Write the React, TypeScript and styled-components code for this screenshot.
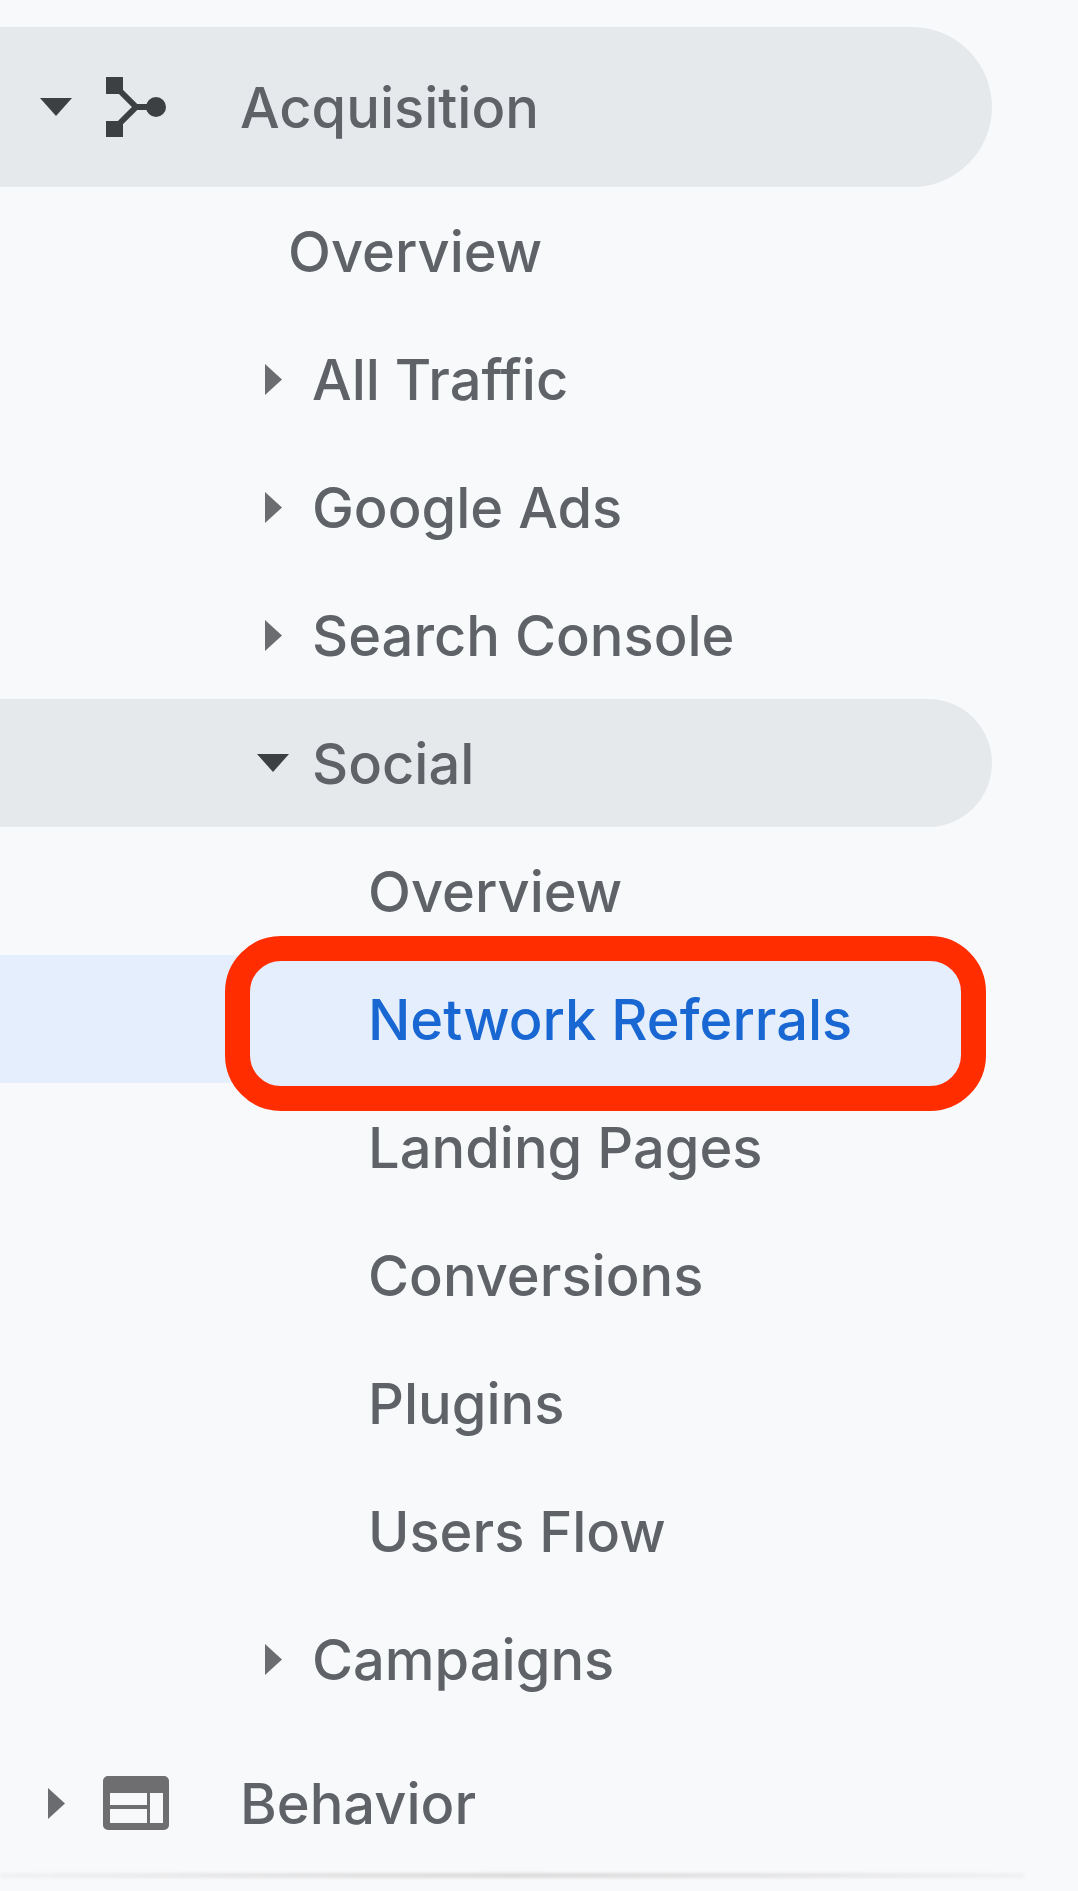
import React, { FC } from "react";
import styled, { createGlobalStyle } from "styled-components";

const GlobalStyle = createGlobalStyle`
  html, body {
    margin: 0;
    padding: 0;
    background: #f8f9fb;
  }
  body {
    font-family: Inter, Roboto, "Noto Sans", sans-serif;
    overflow: hidden;
  }
`;

const Sidebar = styled.nav`
  width: 1078px;
  height: 1891px;
  overflow: hidden;
  background: #f8f9fb;
`;

const Menu = styled.ul`
  list-style: none;
  margin: 0;
  padding: 27px 0 0;
  height: 1846px;
  overflow: hidden;
`;

const Row = styled.li<{ $indent: number; $tall?: boolean; $open?: boolean; $active?: boolean }>`
  position: relative;
  display: flex;
  align-items: center;
  box-sizing: border-box;
  height: ${({ $tall }) => ($tall ? 160 : 128)}px;
  padding-left: ${({ $indent }) => $indent}px;
  width: ${({ $open, $active }) => ($open ? "992px" : $active ? "300px" : "100%")};
  background: ${({ $open, $active }) => ($open ? "#e6e9ec" : $active ? "#e4eefc" : "transparent")};
  border-radius: ${({ $open }) => ($open ? "0 80px 80px 0" : "0")};
`;

const CaretSlot = styled.span`
  display: flex;
  align-items: center;
  justify-content: center;
  flex: none;
  width: 34px;
  margin-right: 22px;
`;

const TopCaretSlot = styled(CaretSlot)`
  margin-right: 30px;
`;

const IconSlot = styled.span`
  display: flex;
  align-items: center;
  justify-content: center;
  flex: none;
  width: 66px;
  margin-right: 71px;
`;

const Label = styled.span<{ $active?: boolean }>`
  position: relative;
  z-index: 1;
  padding-top: 2px;
  font-size: 56px;
  font-weight: 500;
  line-height: 64px;
  white-space: nowrap;
  color: ${({ $active }) => ($active ? "#1967d2" : "#5f6368")};
`;

const Highlight = styled.div`
  position: absolute;
  left: 225px;
  top: -19px;
  width: 761px;
  height: 175px;
  box-sizing: border-box;
  border: 25px solid #ff2d00;
  border-radius: 56px;
  background: #e4eefc;
`;

const Footer = styled.div`
  width: 1024px;
  height: 5px;
  filter: blur(1.5px);
  background: linear-gradient(90deg, #f0f1f2 0%, #e0e0e0 35%, #dadada 50%, #e2e2e3 72%, #f0f1f2 100%);
`;

const CaretDown: FC<{ color?: string }> = ({ color = "#3c4043" }) => (
  <svg width="32" height="18" viewBox="0 0 32 18">
    <path d="M0 0h32L16 18z" fill={color} />
  </svg>
);

const CaretRight: FC = () => (
  <svg width="17" height="31" viewBox="0 0 17 31">
    <path d="M0 0l17 15.5L0 31z" fill="#6a6c70" />
  </svg>
);

const AcquisitionIcon: FC = () => (
  <svg width="60" height="60" viewBox="0 0 60 60">
    <rect x="0" y="0" width="17" height="17" fill="#3c4043" />
    <rect x="0" y="44" width="17" height="17" fill="#3c4043" />
    <circle cx="50" cy="30" r="10" fill="#3c4043" />
    <path d="M12 12l18 18-18 18M30 30h16" fill="none" stroke="#3c4043" strokeWidth="6" />
  </svg>
);

const BehaviorIcon: FC = () => (
  <svg width="66" height="54" viewBox="0 0 66 54">
    <path
      fillRule="evenodd"
      fill="#6e6e71"
      d="M5 0h56a5 5 0 0 1 5 5v44a5 5 0 0 1-5 5H5a5 5 0 0 1-5-5V5a5 5 0 0 1 5-5zM7 17v12h37V17zM7 33v14h37V33zM47 17v30h13V17z"
    />
  </svg>
);

const App: FC = () => (
  <Sidebar>
    <GlobalStyle />
    <Menu>
      <Row $indent={39} $tall $open>
        <TopCaretSlot>
          <CaretDown />
        </TopCaretSlot>
        <IconSlot>
          <AcquisitionIcon />
        </IconSlot>
        <Label>Acquisition</Label>
      </Row>
      <Row $indent={288}>
        <Label>Overview</Label>
      </Row>
      {["All Traffic", "Google Ads", "Search Console"].map((item) => (
        <Row key={item} $indent={256}>
          <CaretSlot>
            <CaretRight />
          </CaretSlot>
          <Label>{item}</Label>
        </Row>
      ))}
      <Row $indent={256} $open>
        <CaretSlot>
          <CaretDown />
        </CaretSlot>
        <Label>Social</Label>
      </Row>
      <Row $indent={368}>
        <Label>Overview</Label>
      </Row>
      <Row $indent={368} $active>
        <Highlight />
        <Label $active>Network Referrals</Label>
      </Row>
      {["Landing Pages", "Conversions", "Plugins", "Users Flow"].map((item) => (
        <Row key={item} $indent={368}>
          <Label>{item}</Label>
        </Row>
      ))}
      <Row $indent={256}>
        <CaretSlot>
          <CaretRight />
        </CaretSlot>
        <Label>Campaigns</Label>
      </Row>
      <Row $indent={39} $tall>
        <TopCaretSlot>
          <CaretRight />
        </TopCaretSlot>
        <IconSlot>
          <BehaviorIcon />
        </IconSlot>
        <Label>Behavior</Label>
      </Row>
    </Menu>
    <Footer />
  </Sidebar>
);

export default App;
